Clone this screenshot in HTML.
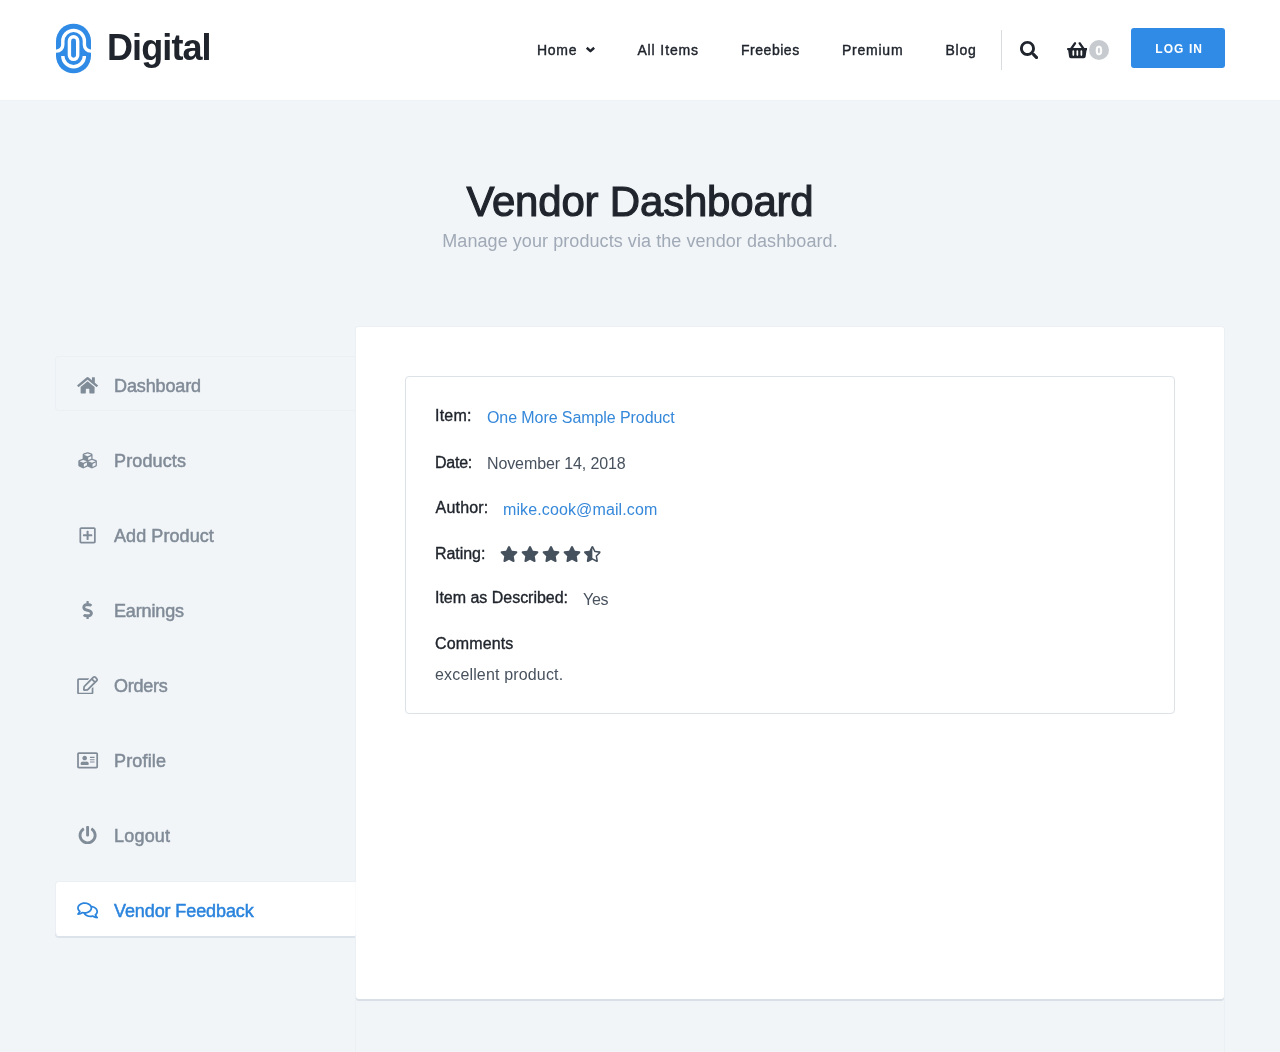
<!DOCTYPE html>
<html lang="en">
<head>
<meta charset="utf-8">
<title>Vendor Dashboard – Digital</title>
<style>
*{box-sizing:border-box;margin:0;padding:0}
html,body{width:1280px;height:1052px;overflow:hidden}
body{background:#f1f5f8;font-family:"Liberation Sans",Arial,sans-serif;color:#212730;position:relative}
a{text-decoration:none;color:inherit}
header,.hero,aside,.card{will-change:transform}
ul{list-style:none}
.med{-webkit-text-stroke:0.4px currentColor}

/* ---------- header ---------- */
header{position:absolute;left:0;top:0;width:1280px;height:101px;background:#fff;border-bottom:1px solid #edf2f6}
.logo{position:absolute;left:50px;top:18px;width:50px;height:60px}
.brand{position:absolute;left:107px;top:26px;font-size:36px;line-height:44px;font-weight:700;color:#20252d;letter-spacing:-0.9px;white-space:nowrap}
nav.main a{position:absolute;top:40px;font-size:14px;line-height:20px;color:#20252d;letter-spacing:0.45px;white-space:nowrap}
.chev{position:absolute;left:585px;top:45px;width:12px;height:10px}
.divider{position:absolute;left:1001px;top:30px;width:1px;height:40px;background:#d9dde1}
.ico-search{position:absolute;left:1020px;top:41px;width:18.400px;height:18.400px}
.ico-basket{position:absolute;left:1066.500px;top:41.200px;width:20.700px;height:18.400px}
.badge{position:absolute;left:1089px;top:40px;width:20px;height:20px;border-radius:50%;background:#c7cbd0;color:#fff;font-size:12.500px;font-weight:700;line-height:22px;text-align:center;-webkit-text-stroke:.5px #fff}
.btn-login{position:absolute;left:1131px;top:28px;width:94px;height:40px;border-radius:3px;background:#308be6;color:#fff;font-size:12px;font-weight:700;letter-spacing:1.07px;line-height:40px;text-align:center;padding:1px 0 0 2.300px}

/* ---------- hero ---------- */
.hero h1{position:absolute;left:0;top:176.500px;width:1280px;text-align:center;font-size:42px;line-height:50px;font-weight:400;color:#20252d;letter-spacing:-0.2px;-webkit-text-stroke:1.1px #20252d}
.hero p{position:absolute;left:0;top:229px;width:1280px;text-align:center;font-size:18px;line-height:24px;color:#a0a9b6;letter-spacing:0.07px}

/* ---------- sidebar ---------- */
aside{position:absolute;left:55px;top:356px;width:300px}
aside li{position:relative;height:55px;margin-bottom:20px;border:1px solid transparent;border-right:0;border-radius:4px 0 0 4px}
aside li a{display:block;height:100%;padding-left:58px;font-size:18px;line-height:59px;color:#808b97;white-space:nowrap;-webkit-text-stroke:0.5px currentColor}
aside li svg{position:absolute;left:20px;top:18.700px;width:23.200px;height:18.600px;fill:#818c99}
aside li.first{border-color:#ebf0f4}
aside li.active{background:#fff;background-clip:padding-box;box-shadow:0 2px 0 #dde3ea;border-color:#ecf0f4;border-bottom-color:#fff}
aside li.active::after{content:"";position:absolute;right:-1px;top:0;width:1px;height:100%;background:#fafbfc}
aside li.active a{color:#2b84dd}
aside li.active svg{fill:#2b84dd}

/* ---------- card ---------- */
.frame{position:absolute;left:355px;top:326px;width:870px;height:740px;border:1px solid #ebf0f4;border-radius:4px;background:#f2f5f8}
.card{position:absolute;left:356px;top:327px;width:868px;height:672.200px;background:#fff;border-radius:3px;box-shadow:0 2px 0 #d9dfe6}
.box{position:absolute;left:49px;top:49px;width:770px;height:338px;border:1px solid #dce2e7;border-radius:4px}
.box .row{position:absolute;left:29px;white-space:nowrap;font-size:16px;line-height:22px}
.lbl{color:#20252d;-webkit-text-stroke:0.35px #20252d;letter-spacing:-0.2px}
.val{position:absolute;top:2px;color:#48525e;letter-spacing:-0.25px;white-space:nowrap}
.val.link{color:#3588da}
.stars{position:absolute;left:94px;top:167.500px;width:104px;height:20px}
</style>
</head>
<body>

<header>
  <svg class="logo" viewBox="50 18 50 60">
    <rect x="56" y="23.700" width="35" height="49.600" rx="17.500" fill="#308be6"/>
    <g fill="none" stroke="#fff" stroke-width="3.400">
      <path d="M55 51.100H56.500A6.300 6.300 0 0 0 62.800 44.800V41.200A10.800 10.800 0 0 1 84.400 41.200V44.800A6.300 6.300 0 0 0 90.700 51.100H92"/>
      <rect x="69.400" y="36.800" width="8.300" height="22.600" rx="4.150"/>
      <path d="M62.800 55.900A10.800 10.800 0 0 0 84.400 55.900"/>
    </g>
  </svg>
  <a class="brand" href="#">Digital</a>
  <nav class="main">
    <a class="med" href="#" style="left:537px;letter-spacing:.7px">Home</a>
    <svg class="chev" viewBox="0 0 12 10"><path d="M1.750 2.750L5.450 6.200L9.150 2.750" fill="none" stroke="#20252d" stroke-width="2.400" stroke-linecap="butt" stroke-linejoin="round"/></svg>
    <a class="med" href="#" style="left:637.400px;letter-spacing:.88px">All Items</a>
    <a class="med" href="#" style="left:741px;letter-spacing:.53px">Freebies</a>
    <a class="med" href="#" style="left:842px;letter-spacing:.76px">Premium</a>
    <a class="med" href="#" style="left:945.400px;letter-spacing:.78px">Blog</a>
  </nav>
  <span class="divider"></span>
  <svg class="ico-search" viewBox="0 0 512 512"><path fill="#20252d" d="M505 442.7L405.3 343c-4.5-4.5-10.600-7-17-7H372c27.600-35.300 44-79.700 44-128C416 93.100 322.900 0 208 0S0 93.100 0 208s93.100 208 208 208c48.300 0 92.700-16.400 128-44v16.300c0 6.400 2.500 12.500 7 17l99.700 99.700c9.400 9.400 24.600 9.400 33.900 0l28.300-28.300c9.400-9.400 9.400-24.600.1-34zM208 336c-70.700 0-128-57.200-128-128 0-70.700 57.200-128 128-128 70.700 0 128 57.200 128 128 0 70.700-57.200 128-128 128z"/></svg>
  <svg class="ico-basket" viewBox="0 0 576 512"><path fill="#20252d" d="M576 216v16c0 13.255-10.745 24-24 24h-8l-26.113 182.788C514.509 462.435 494.257 480 470.370 480H105.630c-23.887 0-44.139-17.565-47.518-41.212L32 256h-8c-13.255 0-24-10.745-24-24v-16c0-13.255 10.745-24 24-24h67.341l106.780-146.821c10.395-14.292 30.407-17.453 44.701-7.058 14.293 10.395 17.453 30.408 7.058 44.701L170.477 192h235.046L326.120 82.821c-10.395-14.292-7.234-34.306 7.059-44.701 14.291-10.395 34.306-7.235 44.701 7.058L484.659 192H552c13.255 0 24 10.745 24 24zM312 392V280c0-13.255-10.745-24-24-24s-24 10.745-24 24v112c0 13.255 10.745 24 24 24s24-10.745 24-24zm112 0V280c0-13.255-10.745-24-24-24s-24 10.745-24 24v112c0 13.255 10.745 24 24 24s24-10.745 24-24zm-224 0V280c0-13.255-10.745-24-24-24s-24 10.745-24 24v112c0 13.255 10.745 24 24 24s24-10.745 24-24z"/></svg>
  <span class="badge">0</span>
  <a class="btn-login" href="#">LOG IN</a>
</header>

<section class="hero">
  <h1>Vendor Dashboard</h1>
  <p>Manage your products via the vendor dashboard.</p>
</section>

<div class="frame"></div>

<aside>
  <ul>
    <li class="first"><svg viewBox="0 0 576 512"><path d="M280.370 148.260L96 300.110V464a16 16 0 0 0 16 16l112.060-.29a16 16 0 0 0 15.920-16V368a16 16 0 0 1 16-16h64a16 16 0 0 1 16 16v95.640a16 16 0 0 0 16 16.050L464 480a16 16 0 0 0 16-16V300L295.670 148.260a12.190 12.190 0 0 0-15.300 0zM571.600 251.470L488 182.560V44.050a12 12 0 0 0-12-12h-56a12 12 0 0 0-12 12v72.610L318.470 43a48 48 0 0 0-61 0L4.340 251.470a12 12 0 0 0-1.600 16.900l25.500 31A12 12 0 0 0 45.150 301l235.220-193.740a12.190 12.190 0 0 1 15.300 0L530.900 301a12 12 0 0 0 16.900-1.600l25.500-31a12 12 0 0 0-1.700-16.930z"/></svg><a href="#" style="letter-spacing:-0.12px">Dashboard</a></li>
    <li><svg viewBox="0 0 512 512"><path d="M488.600 250.200L392 214V105.500c0-15-9.300-28.400-23.400-33.700l-100-37.500c-8.100-3.100-17.100-3.100-25.300 0l-100 37.500c-14.100 5.300-23.400 18.700-23.400 33.700V214l-96.600 36.200C9.300 255.500 0 268.900 0 283.900V394c0 13.600 7.700 26.100 19.900 32.200l100 50c10.100 5.100 22.100 5.100 32.200 0l103.900-52 103.900 52c10.100 5.100 22.100 5.100 32.200 0l100-50c12.200-6.100 19.900-18.600 19.900-32.200V283.900c0-15-9.300-28.400-23.400-33.700zM358 214.800l-85 31.900v-68.200l85-37v73.300zM154 104.100l102-38.200 102 38.200v.6l-102 41.400-102-41.400v-.6zm84 291.100l-85 42.500v-79.100l85-38.800v75.400zm0-112l-102 41.400-102-41.400v-.6l102-38.200 102 38.200v.6zm240 112l-85 42.500v-79.100l85-38.800v75.400zm0-112l-102 41.400-102-41.400v-.6l102-38.200 102 38.200v.6z"/></svg><a href="#" style="letter-spacing:0.14px">Products</a></li>
    <li><svg viewBox="0 0 448 512"><path d="M352 240v32c0 6.600-5.400 12-12 12h-88v88c0 6.600-5.400 12-12 12h-32c-6.600 0-12-5.400-12-12v-88h-88c-6.600 0-12-5.400-12-12v-32c0-6.600 5.400-12 12-12h88v-88c0-6.600 5.400-12 12-12h32c6.600 0 12 5.400 12 12v88h88c6.600 0 12 5.400 12 12zm96-160v352c0 26.500-21.500 48-48 48H48c-26.500 0-48-21.500-48-48V80c0-26.500 21.500-48 48-48h352c26.500 0 48 21.500 48 48zm-48 346V86c0-3.300-2.700-6-6-6H54c-3.300 0-6 2.700-6 6v340c0 3.300 2.700 6 6 6h340c3.300 0 6-2.700 6-6z"/></svg><a href="#" style="letter-spacing:0.08px">Add Product</a></li>
    <li><svg viewBox="0 0 288 512"><path d="M209.200 233.400l-108-31.600C88.700 198.200 80 186.500 80 173.500c0-16.300 13.200-29.500 29.500-29.500h66.300c12.200 0 24.200 3.700 34.200 10.500 6.100 4.100 14.300 3.100 19.500-2l34.800-34c7.100-6.900 6.100-18.400-1.800-24.500C238 74.800 207.400 64.100 176 64V16c0-8.800-7.200-16-16-16h-32c-8.800 0-16 7.200-16 16v48h-2.500C45.800 64-5.400 118.700.5 183.600c4.200 46.100 39.400 83.600 83.800 96.600l102.500 30c12.500 3.700 21.200 15.300 21.200 28.300 0 16.300-13.200 29.500-29.500 29.500h-66.300C100 368 88 364.300 78 357.500c-6.100-4.100-14.300-3.100-19.500 2l-34.800 34c-7.100 6.900-6.100 18.400 1.800 24.500 24.500 19.200 55.100 29.900 86.500 30v48c0 8.800 7.200 16 16 16h32c8.800 0 16-7.200 16-16v-48.200c46.600-.9 90.300-28.600 105.700-72.700 21.500-61.600-14.600-124.800-72.500-141.700z"/></svg><a href="#" style="letter-spacing:-0.14px">Earnings</a></li>
    <li><svg viewBox="0 0 576 512"><path d="M402.300 344.900l32-32c5-5 13.700-1.500 13.700 5.700V464c0 26.500-21.500 48-48 48H48c-26.500 0-48-21.500-48-48V112c0-26.500 21.500-48 48-48h273.500c7.100 0 10.700 8.600 5.700 13.700l-32 32c-1.500 1.500-3.500 2.300-5.700 2.300H48v352h352V350.500c0-2.100.8-4.100 2.300-5.600zm156.600-201.800L296.300 405.700l-90.400 10c-26.200 2.900-48.500-19.200-45.600-45.600l10-90.400L432.900 17.100c22.900-22.900 59.900-22.900 82.700 0l43.200 43.200c22.900 22.900 22.900 60 .1 82.800zM460.100 174L402 115.900 216.200 301.800l-7.300 65.300 65.300-7.300L460.100 174zm64.800-79.700l-43.200-43.200c-4.100-4.100-10.800-4.100-14.800 0L436 82l58.100 58.100 30.900-30.900c4-4.200 4-10.800-.1-14.900z"/></svg><a href="#" style="letter-spacing:-0.25px">Orders</a></li>
    <li><svg viewBox="0 0 576 512"><path d="M528 32H48C21.500 32 0 53.500 0 80v352c0 26.500 21.500 48 48 48h480c26.500 0 48-21.500 48-48V80c0-26.500-21.500-48-48-48zm0 400H48V80h480v352zM208 256c35.300 0 64-28.700 64-64s-28.700-64-64-64-64 28.700-64 64 28.700 64 64 64zm-89.600 128h179.200c12.400 0 22.400-8.600 22.400-19.200v-19.200c0-31.800-30.100-57.600-67.200-57.600-10.800 0-18.700 8-44.800 8-26.900 0-33.400-8-44.800-8-37.100 0-67.200 25.800-67.200 57.600v19.200c0 10.600 10 19.200 22.400 19.200zM360 320h112c4.400 0 8-3.600 8-8v-16c0-4.400-3.600-8-8-8H360c-4.400 0-8 3.600-8 8v16c0 4.400 3.600 8 8 8zm0-64h112c4.400 0 8-3.600 8-8v-16c0-4.400-3.600-8-8-8H360c-4.400 0-8 3.600-8 8v16c0 4.400 3.600 8 8 8zm0-64h112c4.400 0 8-3.600 8-8v-16c0-4.400-3.600-8-8-8H360c-4.400 0-8 3.600-8 8v16c0 4.400 3.600 8 8 8z"/></svg><a href="#" style="letter-spacing:0.17px">Profile</a></li>
    <li><svg viewBox="0 0 512 512"><path d="M400 54.100c63 45 104 118.600 104 201.900 0 136.800-110.800 247.700-247.500 248C120 504.300 8.200 393 8 256.400 7.900 173.100 48.900 99.300 111.800 54.200c11.700-8.300 28-4.800 35 7.700L162.600 90c5.900 10.500 3.100 23.800-6.600 31-41.500 30.800-68 79.600-68 134.900-.1 92.300 74.500 168.100 168 168.100 91.600 0 168.600-74.200 168-169.100-.3-51.800-24.700-101.800-68.100-134-9.700-7.200-12.400-20.500-6.500-30.900l15.800-28.100c7-12.400 23.200-16.100 34.800-7.800zM296 264V24c0-13.300-10.700-24-24-24h-32c-13.300 0-24 10.700-24 24v240c0 13.300 10.700 24 24 24h32c13.300 0 24-10.700 24-24z"/></svg><a href="#" style="letter-spacing:0.2px">Logout</a></li>
    <li class="active"><svg viewBox="0 0 576 512"><path d="M532 386.200c27.500-27.100 44-61.100 44-98.200 0-80-76.500-146.100-176.200-157.900C368.300 72.500 294.300 32 208 32 93.100 32 0 103.600 0 192c0 37 16.500 71 44 98.200-15.300 30.700-37.300 54.500-37.700 54.900-6.300 6.700-8.100 16.500-4.400 25 3.600 8.500 12 14 21.200 14 53.500 0 96.700-20.200 125.200-38.800 9.200 2.100 18.700 3.700 28.400 4.900C208.100 407.600 281.800 448 368 448c20.800 0 40.800-2.400 59.800-6.800C456.300 459.700 499.400 480 553 480c9.200 0 17.500-5.500 21.200-14 3.600-8.500 1.900-18.300-4.400-25-.4-.3-22.500-24.100-37.800-54.800zm-392.800-92.300L122.100 305c-14.100 9.100-28.500 16.300-43.100 21.400 2.700-4.700 5.400-9.700 8-14.800l15.500-31.100L77.700 256C64.200 242.600 48 220.700 48 192c0-60.700 73.300-112 160-112s160 51.300 160 112-73.300 112-160 112c-16.500 0-33-1.900-49-5.600l-19.800-4.500zM498.300 352l-24.700 24.400 15.500 31.100c2.600 5.100 5.300 10.100 8 14.800-14.600-5.100-29-12.300-43.100-21.400l-17.100-11.100-19.900 4.600c-16 3.700-32.500 5.600-49 5.600-54 0-102.200-20.100-131.300-49.700C338 339.500 416 272.900 416 192c0-3.400-.4-6.700-.7-10C479.700 196.500 528 238.800 528 288c0 28.700-16.200 50.600-29.700 64z"/></svg><a href="#" style="letter-spacing:-0.1px">Vendor Feedback</a></li>
  </ul>
</aside>

<main class="card">
  <div class="box">
    <div class="row" style="top:28px"><span class="lbl" style="letter-spacing:.2px">Item:</span><a class="val link" href="#" style="left:52px;letter-spacing:-.08px">One More Sample Product</a></div>
    <div class="row" style="top:74px"><span class="lbl" style="position:relative;top:1px;letter-spacing:-.25px">Date:</span><span class="val" style="left:52px;letter-spacing:-.11px">November 14, 2018</span></div>
    <div class="row" style="top:120px"><span class="lbl" style="letter-spacing:.18px;margin-left:.6px">Author:</span><a class="val link" href="#" style="left:68px;letter-spacing:.12px">mike.cook@mail.com</a></div>
    <div class="row" style="top:166px"><span class="lbl" style="letter-spacing:-.06px">Rating:</span></div>
    <svg class="stars" viewBox="0 0 104 20" fill="#46515e"><svg x="0" y="1" width="18" height="16" viewBox="0 0 576 512"><path d="M259.300 17.800L194 150.200 47.900 171.500c-26.200 3.800-36.700 36.100-17.700 54.600l105.700 103-25 145.500c-4.500 26.300 23.200 46 46.400 33.700L288 439.600l130.700 68.700c23.200 12.200 50.900-7.400 46.400-33.700l-25-145.500 105.700-103c19-18.500 8.500-50.800-17.700-54.600L382 150.200 316.700 17.800c-11.700-23.600-45.600-23.900-57.400 0z"/></svg><svg x="21" y="1" width="18" height="16" viewBox="0 0 576 512"><path d="M259.300 17.800L194 150.200 47.900 171.500c-26.200 3.800-36.700 36.100-17.700 54.600l105.700 103-25 145.500c-4.500 26.300 23.200 46 46.400 33.700L288 439.600l130.700 68.700c23.200 12.200 50.900-7.400 46.400-33.700l-25-145.500 105.700-103c19-18.500 8.500-50.800-17.700-54.600L382 150.200 316.700 17.800c-11.700-23.600-45.600-23.900-57.400 0z"/></svg><svg x="42" y="1" width="18" height="16" viewBox="0 0 576 512"><path d="M259.300 17.800L194 150.200 47.900 171.500c-26.200 3.800-36.700 36.100-17.700 54.600l105.700 103-25 145.500c-4.500 26.300 23.200 46 46.400 33.700L288 439.600l130.700 68.700c23.200 12.200 50.900-7.400 46.400-33.700l-25-145.500 105.700-103c19-18.500 8.500-50.800-17.700-54.600L382 150.200 316.700 17.800c-11.700-23.600-45.600-23.900-57.400 0z"/></svg><svg x="63" y="1" width="18" height="16" viewBox="0 0 576 512"><path d="M259.300 17.800L194 150.200 47.900 171.500c-26.200 3.800-36.700 36.100-17.700 54.600l105.700 103-25 145.500c-4.500 26.300 23.200 46 46.400 33.700L288 439.600l130.700 68.700c23.200 12.200 50.900-7.400 46.400-33.700l-25-145.500 105.700-103c19-18.500 8.500-50.800-17.700-54.600L382 150.200 316.700 17.800c-11.700-23.600-45.600-23.900-57.400 0z"/></svg><svg x="84" y="1" width="16.750" height="16" viewBox="0 0 536 512"><path d="M508.550 171.510L362.180 150.200 296.770 17.810C290.890 5.980 279.420 0 267.950 0c-11.400 0-22.790 5.900-28.690 17.810l-65.430 132.380-146.380 21.290c-26.250 3.800-36.770 36.090-17.740 54.590l105.890 103-25.060 145.480C86.980 495.330 103.570 512 122.150 512c4.930 0 10-1.170 14.870-3.750l130.950-68.680 130.940 68.700c4.860 2.550 9.920 3.710 14.830 3.710 18.600 0 35.220-16.610 31.660-37.400l-25.030-145.490 105.910-102.980c19.040-18.500 8.520-50.800-17.730-54.600zm-121.740 123.200l-18.120 17.620 4.280 24.880 19.520 113.450-102.130-53.590-22.380-11.740.03-317.190 51.030 103.290 11.180 22.630 25.010 3.640 114.230 16.630-82.650 80.380z"/></svg></svg>
    <div class="row" style="top:210px"><span class="lbl" style="letter-spacing:-.02px">Item as Described:</span><span class="val" style="left:148px">Yes</span></div>
    <div class="row" style="top:256px"><span class="lbl" style="letter-spacing:.13px">Comments</span></div>
    <div class="row" style="top:287px"><span class="val" style="position:static;letter-spacing:.16px">excellent product.</span></div>
  </div>
</main>

</body>
</html>
